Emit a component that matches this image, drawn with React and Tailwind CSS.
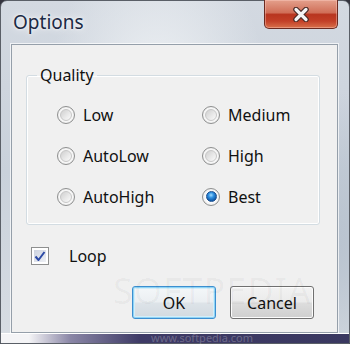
import React from 'react';

function Radio({ label, checked }) {
  return (
    <div className="flex items-center gap-[8px] h-[41px]">
      <span className="w-[18px] h-[18px] rounded-full border border-[#8e8f8f] bg-[radial-gradient(circle,#ffffff_45%,#dcdcdc_100%)] flex items-center justify-center">
        {checked ? (
          <span className="w-[11px] h-[11px] rounded-full border border-[#1c4f8f] bg-[radial-gradient(circle_at_45%_35%,#9fdcff_0%,#2f8fe0_35%,#0b4f9e_80%)]" />
        ) : (
          <span className="w-[12px] h-[12px] rounded-full border border-[#c6c6c6] bg-[linear-gradient(135deg,#cfcfcf_0%,#e6e6e6_50%,#fbfbfb_100%)]" />
        )}
      </span>
      <span>{label}</span>
    </div>
  );
}

export default function App() {
  return (
    <div className="w-[350px] h-[344px] bg-[#34343e] overflow-hidden font-['Noto_Sans',sans-serif] text-[16px] text-[#111]">
      <div className="relative h-full flex flex-col rounded-t-[7px] border border-[#5a5f67] pl-[10px] pr-[11px] bg-[radial-gradient(ellipse_at_45%_25%,#eef1f4_0%,rgba(238,241,244,0)_40%),radial-gradient(ellipse_at_85%_70%,#b4bfcc_0%,rgba(180,191,204,0)_45%),linear-gradient(180deg,#d3d9e1_0%,#c9d1db_50%,#d8dde3_100%)]">
        <div className="h-[43px] flex items-start justify-between">
          <span className="ml-[2px] pt-[9px] text-[19px] leading-[25px] text-[#1c2a44] [text-shadow:0_0_8px_rgba(255,255,255,0.95),0_0_3px_rgba(255,255,255,0.9)]">
            Options
          </span>
          <div className="-mt-px w-[74px] h-[29px] rounded-b-[5px] border border-t-0 border-[#6b2a20] bg-[linear-gradient(180deg,#e4a08c_0%,#d06f58_45%,#b8351f_52%,#c23f27_75%,#d8704a_100%)] shadow-[inset_0_0_0_1px_rgba(255,210,200,0.4)] flex items-center justify-center">
            <svg width="20" height="15" viewBox="0 0 20 15">
              <path d="M5 2.5 L15 12.5 M15 2.5 L5 12.5" stroke="#4a2a26" strokeWidth="5.5" strokeLinecap="round" />
              <path d="M5 2.5 L15 12.5 M15 2.5 L5 12.5" stroke="#f4f4f4" strokeWidth="3.2" strokeLinecap="round" />
            </svg>
          </div>
        </div>

        <div className="flex-1 flex flex-col bg-[#f0f0f0] border border-[#959faa] shadow-[0_0_0_1px_rgba(255,255,255,0.7)]">
          <fieldset className="ml-[14px] mt-[20px] w-[294px] border border-[#d3dce2] rounded-[3px] shadow-[inset_0_0_0_1px_#ffffff] pb-[7px]">
            <legend className="ml-[10px] px-[3px] leading-[20px]">Quality</legend>
            <div className="pt-[9px] pl-[30px] grid grid-cols-[145px_1fr]">
              <Radio label="Low" />
              <Radio label="Medium" />
              <Radio label="AutoLow" />
              <Radio label="High" />
              <Radio label="AutoHigh" />
              <Radio label="Best" checked />
            </div>
          </fieldset>

          <div className="mt-[22px] pl-[19px] flex items-center gap-[20px] h-[18px]">
            <span className="w-[18px] h-[18px] border border-[#8e8f8f] bg-white p-[2px]">
              <span className="w-full h-full flex items-center justify-center bg-[linear-gradient(135deg,#cdd3df_0%,#eef0f5_100%)]">
                <svg width="12" height="11" viewBox="0 0 12 11">
                  <path d="M1.5 5.5 L4.5 9 L10.5 1" fill="none" stroke="#2c4aa6" strokeWidth="2" strokeLinejoin="round" />
                </svg>
              </span>
            </span>
            <span>Loop</span>
          </div>

          <div className="mt-[21px] pr-[23px] flex justify-end gap-[14px]">
            <button className="w-[84px] h-[33px] rounded-[3px] border border-[#3c8fd0] shadow-[inset_0_0_0_1px_#8fd3f5,inset_0_0_0_2px_#d3eef9] bg-[linear-gradient(180deg,#f4f7f9_0%,#ebeff2_48%,#dde3e8_52%,#d2dae0_100%)]">
              OK
            </button>
            <button className="w-[84px] h-[33px] rounded-[3px] border border-[#707070] shadow-[inset_0_0_0_1px_#fcfcfc] bg-[linear-gradient(180deg,#f2f2f2_0%,#ebebeb_48%,#dddddd_52%,#cfcfcf_100%)]">
              Cancel
            </button>
          </div>
        </div>

        <div className="-ml-[10px] -mr-[11px] h-[10px] border-t border-white bg-[linear-gradient(90deg,#f4f4f6_0%,#f4f4f6_8%,#8a86a6_20%,#3e3a66_40%,#3a3860_100%)]" />

        <div className="absolute left-[112px] top-[272px] text-[36px] leading-none tracking-[1px] text-black/[0.035] pointer-events-none">
          SOFTPEDIA
        </div>
        <div className="absolute left-[150px] top-[331px] text-[11px] leading-none text-white/25 pointer-events-none">
          www.softpedia.com
        </div>
      </div>
    </div>
  );
}
